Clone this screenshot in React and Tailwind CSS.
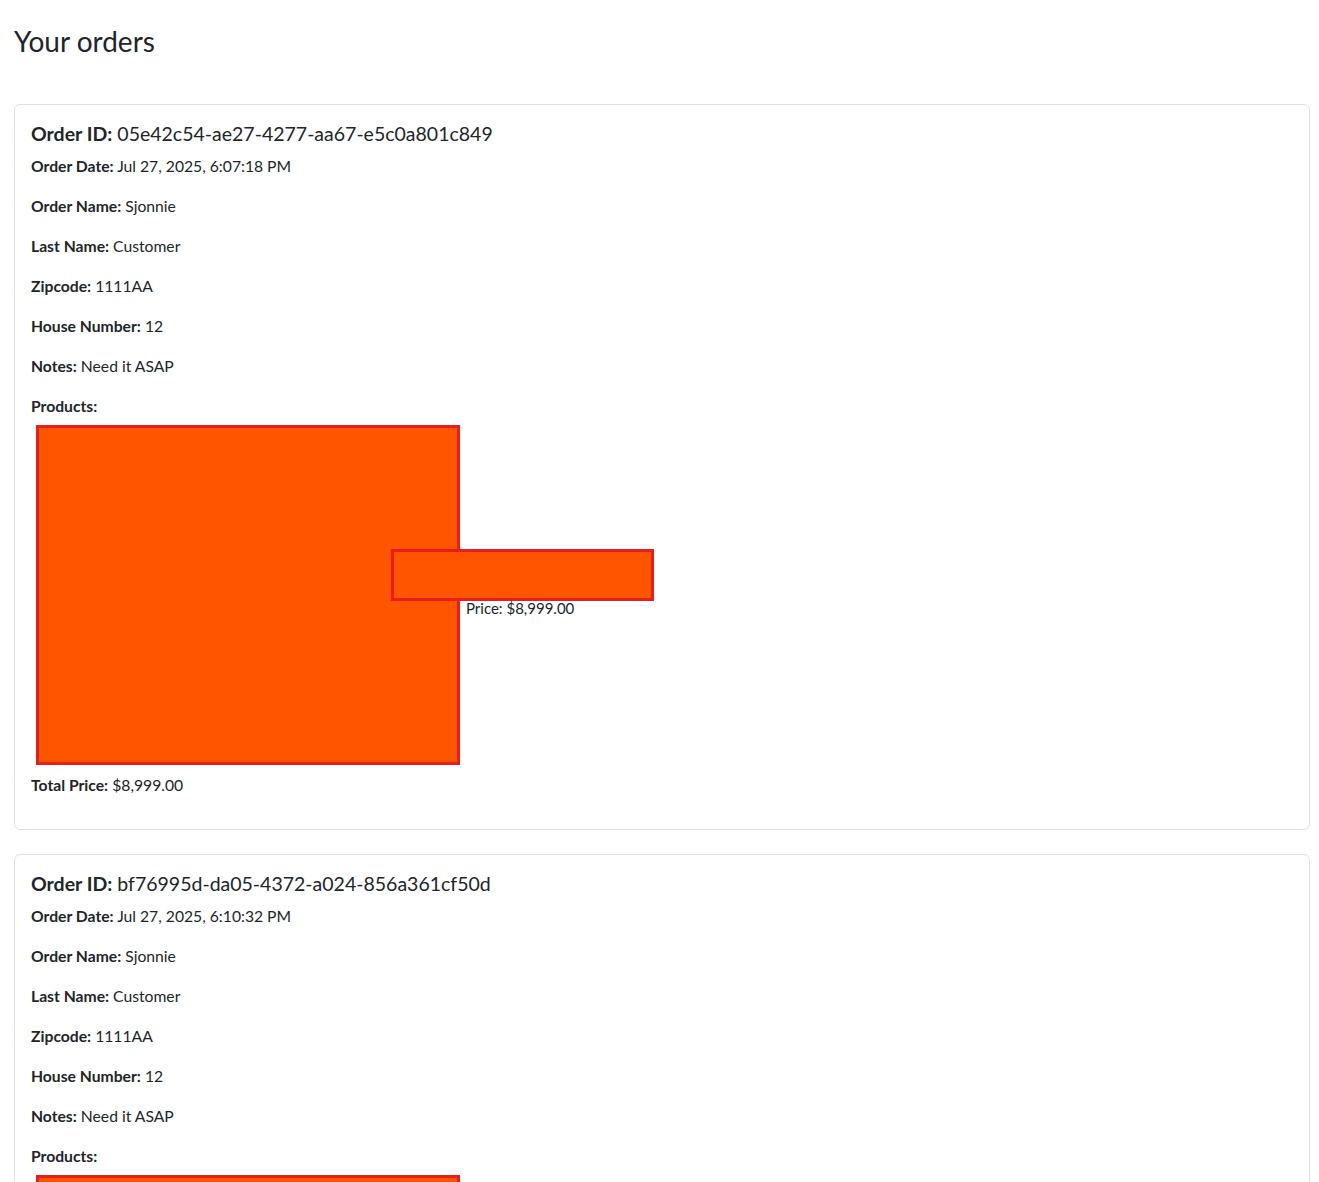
import React from 'react';

const orders = [
  {
    id: '05e42c54-ae27-4277-aa67-e5c0a801c849',
    date: 'Jul 27, 2025, 6:07:18 PM',
    name: 'Sjonnie',
    lastName: 'Customer',
    zipcode: '1111AA',
    house: '12',
    notes: 'Need it ASAP',
    price: '$8,999.00',
  },
  {
    id: 'bf76995d-da05-4372-a024-856a361cf50d',
    date: 'Jul 27, 2025, 6:10:32 PM',
    name: 'Sjonnie',
    lastName: 'Customer',
    zipcode: '1111AA',
    house: '12',
    notes: 'Need it ASAP',
    price: '$8,999.00',
  },
];

function Field({ label, value }) {
  return (
    <p className="mb-4 leading-6">
      <strong className="font-bold">{label}:</strong> {value}
    </p>
  );
}

function OrderCard({ order }) {
  return (
    <div className="mb-6 rounded-md border border-[#dee2e6] bg-white">
      <div className="px-4 pb-4 pt-[17px]">
        <h5 className="mb-2 text-[19.5px] leading-6">
          <strong className="font-bold">Order ID:</strong> {order.id}
        </h5>
        <Field label="Order Date" value={order.date} />
        <Field label="Order Name" value={order.name} />
        <Field label="Last Name" value={order.lastName} />
        <Field label="Zipcode" value={order.zipcode} />
        <Field label="House Number" value={order.house} />
        <Field label="Notes" value={order.notes} />
        <p className="mb-[7px] leading-6">
          <strong className="font-bold">Products:</strong>
        </p>
        <div className="relative flex items-center pl-[5px]">
          <div className="h-[340px] w-[424px] shrink-0 border-[3px] border-[#e81d1d] bg-[#ff5400]" />
          <div className="ml-[6px] flex flex-col pt-[16px] text-[15px] leading-5">
            <span className="h-[10px]" />
            <span>Price: {order.price}</span>
          </div>
          <div className="absolute left-[360px] top-[124px] h-[52px] w-[263px] border-[3px] border-[#e81d1d] bg-[#ff5400]" />
        </div>
        <p className="mb-4 mt-2 leading-6">
          <strong className="font-bold">Total Price:</strong> {order.price}
        </p>
      </div>
    </div>
  );
}

export default function App() {
  return (
    <div className="min-h-screen bg-white pl-[14px] pr-[9px] pt-[25px] text-[15.7px] text-[#212529] font-['Lato','Noto_Sans',sans-serif]">
      <h3 className="mb-[45px] text-[28px] leading-[1.2]">Your orders</h3>
      {orders.map((o) => (
        <OrderCard key={o.id} order={o} />
      ))}
    </div>
  );
}
